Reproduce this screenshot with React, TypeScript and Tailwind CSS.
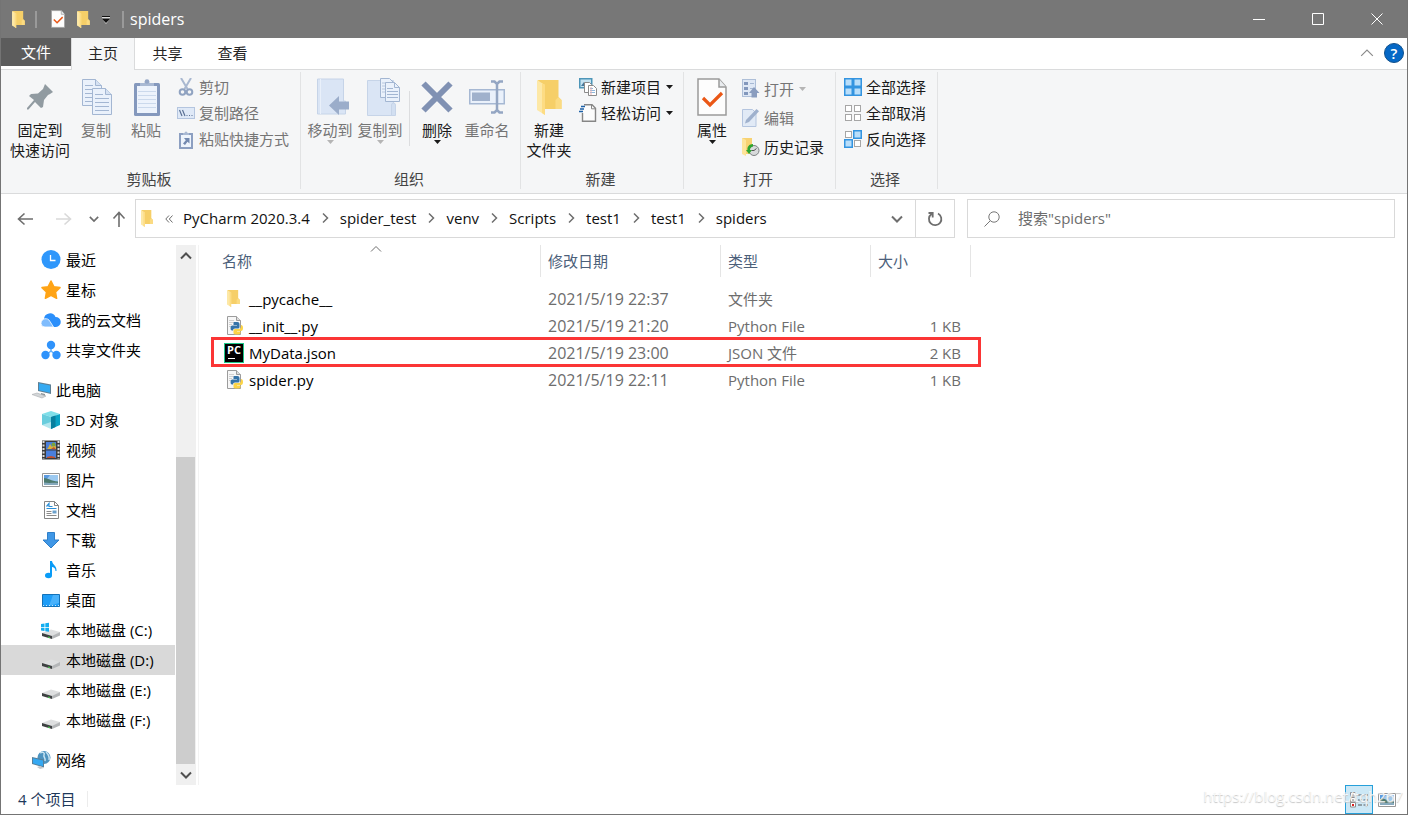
import type { ReactNode } from "react";

type IconProps = { className?: string };

const FolderIcon = ({ className }: IconProps) => (
  <svg viewBox="0 0 25 35" className={className} preserveAspectRatio="none">
    <path d="M1 0h20.5v17l3 3v9H8z" fill="#f6cf68" />
    <path d="M21.5 17l3 3v9h-6V20z" fill="#fbdb82" />
    <path d="M0 0l8 5v30l-8-5z" fill="#fde8a6" />
    <path d="M5 3.200l3 1.800v30l-3-1.900z" fill="#fddc83" />
  </svg>
);

const PropertiesIcon = ({ className }: IconProps) => (
  <svg viewBox="0 0 30 38" className={className}>
    <path d="M1 1h21l7 8v28H1z" fill="#fdfdfd" stroke="#9a9a9a" strokeWidth="1.5" />
    <path d="M22 1v8h7" fill="#e9ecef" stroke="#9a9a9a" strokeWidth="1.5" />
    <path d="M6 20l7 7L25 15" fill="none" stroke="#ea5716" strokeWidth="3.200" />
  </svg>
);

const PinIcon = () => (
  <svg viewBox="0 0 26 26" className="h-[26px] w-[26px]">
    <path
      d="M18 0l8 8-3 2-2 1-4 5-1 7-2 1-6-6L1.500 25.500 0 25.500v-1.500L7 16 2 12l2-2 7-.500L16 5z"
      fill="#919ba1"
    />
  </svg>
);

const Page = ({ x, y }: { x: number; y: number }) => (
  <g transform={`translate(${x} ${y})`}>
    <path d="M.5.5h13l6 6v20H.5z" fill="#eaf1fb" stroke="#a3b6d2" />
    <path d="M13.500.500v6h6" fill="#d5e1f2" stroke="#a3b6d2" />
    <path d="M3 6.500h8M3 10.500h14M3 14.500h14M3 18.500h14M3 22.500h14" stroke="#a3b6d2" />
  </g>
);

const CopyIcon = () => (
  <svg viewBox="-2 0 32 36" className="h-9 w-8">
    <Page x={0} y={0} />
    <Page x={10} y={9} />
  </svg>
);

const PasteIcon = () => (
  <svg viewBox="-1 0 27 37" className="h-[37px] w-[27px]">
    <rect y="4" width="26" height="33" rx="1.500" fill="#8498bd" />
    <rect x="3" y="7" width="20" height="27" fill="#edf3fc" />
    <path d="M4 12.500h18M4 16.500h18M4 20.500h18M4 24.500h18M4 28.500h18" stroke="#cbd9ec" />
    <path d="M6 7V4h4.500a2.500 2.500 0 015 0H20v3z" fill="#a9b9d3" />
    <circle cx="13" cy="2.500" r="2.300" fill="#94a6c6" />
  </svg>
);

const CutIcon = () => (
  <svg viewBox="0 0 18 18" className="h-[18px] w-[18px]" fill="none">
    <path d="M4 0l6.500 11M14 0L7.500 11" stroke="#a9b8d0" strokeWidth="2" />
    <circle cx="5.500" cy="14" r="2.800" stroke="#90a3c1" strokeWidth="2" />
    <circle cx="12.500" cy="14" r="2.800" stroke="#90a3c1" strokeWidth="2" />
  </svg>
);

const CopyPathIcon = () => (
  <svg viewBox="0 0 18 12" className="h-3 w-[18px]">
    <rect x=".5" y=".5" width="17" height="11" fill="#dfe9f7" stroke="#b4c5df" />
    <path d="M2.500 3l2.500 6M5.500 3L8 9" stroke="#5b7195" strokeWidth="1.200" />
    <path d="M9.500 8.500h1M12 8.500h1M14.500 8.500h1" stroke="#5b7195" />
  </svg>
);

const PasteShortcutIcon = () => (
  <svg viewBox="0 0 18 19" className="h-[19px] w-[18px]">
    <rect x="2" y="3" width="14" height="16" fill="#8c9fc1" />
    <rect x="4" y="5" width="10" height="12" fill="#eef4fc" />
    <path d="M6 5V3h1.500a1.500 1.500 0 013 0H12v2z" fill="#a9b9d3" />
    <path d="M7 8h5.500v5.500l-2-1.800L8 15l-2-1.500 2.800-3.300z" fill="#7389b0" />
  </svg>
);

const MoveToIcon = () => (
  <svg viewBox="-6 0 38 38" className="h-[38px] w-[38px]">
    <path d="M.5 1h26v22h2v13H.5z" fill="#dae5f5" stroke="#c6d4e8" />
    <path d="M3.500 1v35" stroke="#e9f0fa" />
    <path d="M12 27.500L22 18v5.500h10v8H22V37z" fill="#9badca" />
  </svg>
);

const CopyToIcon = () => (
  <svg viewBox="-8 0 42 39" className="h-[39px] w-[42px]">
    <path d="M.5 2.500h26v35H.5z" fill="#dae5f5" stroke="#c6d4e8" />
    <path d="M24.500 27a2 2 0 014 0v10.500h-4z" fill="#d2dff1" stroke="#c6d4e8" />
    <path d="M13.500.500h9l4 4v15h-13z" fill="#eaf1fb" stroke="#a3b6d2" />
    <path d="M15 5h7M15 8h9M15 11h9M15 14h9" stroke="#b9c8de" />
    <path d="M18.500 4.500h9l5 5v14h-14z" fill="#eaf1fb" stroke="#a3b6d2" />
    <path d="M27.500 4.500v5h5" fill="none" stroke="#a3b6d2" />
    <path d="M20 10.500h6M20 13.500h11M20 16.500h11M20 19.500h11" stroke="#a3b6d2" />
  </svg>
);

const DeleteIcon = () => (
  <svg viewBox="0 0 32 32" className="h-8 w-8">
    <path d="M2.500 2.500l27 27M29.500 2.500l-27 27" stroke="#8091b3" strokeWidth="6" />
  </svg>
);

const RenameIcon = () => (
  <svg viewBox="0 0 36 34" className="h-[34px] w-9" fill="none">
    <rect x=".75" y="9.750" width="34.500" height="14" fill="#eaf1fb" stroke="#a6b8d3" strokeWidth="1.500" />
    <rect x="3" y="12.500" width="18" height="8.500" fill="#a0b1cc" />
    <path d="M28 3v28M22 1.500h3.500L28 4l2.500-2.500H34M22 32.500h3.500L28 30l2.500 2.500H34" stroke="#94a6c3" strokeWidth="2.500" />
  </svg>
);

const NewItemIcon = () => (
  <svg viewBox="0 0 18 18" className="h-[18px] w-[18px]">
    <rect x=".75" y=".75" width="12" height="9" fill="#c5e3f2" stroke="#4d95b8" strokeWidth="1.500" />
    <path d="M2 8l3-4 3 4z" fill="#47789a" />
    <path d="M5.500 4.500h5l2 2v8h-7z" fill="#fff" stroke="#8b8b8b" />
    <path d="M9.500 7.500h5l3 3v7h-8z" fill="#fff" stroke="#8b8b8b" />
    <path d="M11 10.500h3M11 12.500h5M11 14.500h5" stroke="#8db7dc" />
    <path d="M12 9v8" stroke="#e7b0b0" />
  </svg>
);

const EasyAccessIcon = () => (
  <svg viewBox="0 0 18 18" className="h-[18px] w-[18px]">
    <path d="M5 .75h8l3.500 3.500v13H3.500V9" fill="#fcfcfc" stroke="#868686" strokeWidth="1.400" />
    <path d="M12.500.800v4h4" fill="none" stroke="#868686" />
    <path d="M2 2.500h4M1 5h4M0 7.500h4" stroke="#1e62a8" strokeWidth="1.300" />
  </svg>
);

const OpenIcon = () => (
  <svg viewBox="0 0 18 19" className="h-[19px] w-[18px]">
    <rect x=".5" y=".5" width="13" height="17" fill="#dfe8f5" stroke="#aebfd8" />
    <path d="M2 3h4v3H2zM2 8h4v3H2zM2 13h4v3H2z" fill="#8297bc" />
    <path d="M8 4.500h4M8 9.500h3" stroke="#a6b8d3" />
    <path d="M12 8l5.500 6H15v4.500H9.500V14H7z" fill="#8a9dbf" />
  </svg>
);

const EditIcon = () => (
  <svg viewBox="0 0 18 19" className="h-[19px] w-[18px]">
    <path d="M.5 1.500h10l3.500 3.500v13.500H.5z" fill="#e1eaf6" stroke="#b4c5df" />
    <path d="M4 12L14.500 1l2.500 2.300L7 14l-4 1.500z" fill="#9fb1cd" />
  </svg>
);

const HistoryIcon = () => (
  <svg viewBox="0 0 18 18" className="h-[18px] w-[18px]">
    <path d="M0 0h10v10l1 6H3z" fill="#f7d272" />
    <path d="M0 0l4 2v16l-4-2z" fill="#fde49a" />
    <circle cx="12" cy="12.500" r="5" fill="#d7dadb" stroke="#7c8183" />
    <path d="M12 12.500l2.500-2M12 12.500h-2.500" stroke="#555" />
    <path d="M11 6C7 6 5 9 5.500 12H4l3 4 3-4H8c0-2 1-3 3-3.500z" fill="#2ca42f" />
  </svg>
);

const SelectIcon = ({ on }: { on: boolean[] }) => (
  <svg viewBox="0 0 18 18" className="h-[18px] w-[18px]">
    {on.map((filled, i) => {
      const x = (i % 2) * 9;
      const y = Math.floor(i / 2) * 9;
      return filled ? (
        <rect key={i} x={x + 0.75} y={y + 0.75} width="7.500" height="7.500" fill="#b9defa" stroke="#3394e0" strokeWidth="1.500" />
      ) : (
        <rect key={i} x={x + 1.5} y={y + 1.5} width="6" height="6" fill="#fff" stroke="#a6a6a6" />
      );
    })}
  </svg>
);

const Caret = ({ className }: IconProps) => (
  <svg viewBox="0 0 7 4" className={`h-1 w-[7px] ${className}`}>
    <path d="M0 0h7L3.500 4z" fill="currentColor" />
  </svg>
);

const Chevron = ({ d, className }: { d: string; className?: string }) => (
  <svg viewBox="0 0 12 12" className={className} fill="none" stroke="currentColor">
    <path d={d} />
  </svg>
);
const UP = "M1 8.500l5-5 5 5";
const DOWN = "M1 3.500l5 5 5-5";
const RIGHT = "M4 1.500L8.500 6 4 10.500";

/* navigation pane icons, all on a 20px grid */
const RecentIcon = () => (
  <>
    <circle cx="10" cy="9.500" r="9.500" fill="#2f97fb" />
    <path d="M9.500 5v5.500h5" fill="none" stroke="#fff" strokeWidth="1.300" />
  </>
);
const StarIcon = () => (
  <path
    d="M10 1l2.800 5.700 6.200.9-4.500 4.400 1.100 6.300-5.600-3-5.600 3L5.500 12 1 7.600l6.200-.9z"
    fill="#ffa416"
    stroke="#ffa416"
    strokeWidth="1.500"
    strokeLinejoin="round"
  />
);
const CloudIcon = () => (
  <>
    <path d="M3 9a6 6 0 0111.500-2A5 5 0 0115 17H7z" fill="#2b8ffb" />
    <path d="M0 13.500C0 8 7 7 9 11.500L12.500 17H4a3.800 3.800 0 01-4-3.500z" fill="#7fbcfd" stroke="#fff" strokeWidth=".8" />
  </>
);
const ShareIcon = () => (
  <>
    <path d="M10 6v5l-5 4M10 11l5 4" stroke="#60aefb" strokeWidth="1.500" fill="none" />
    <circle cx="10" cy="5" r="4.200" fill="#2f93fb" />
    <circle cx="4.500" cy="15" r="4.200" fill="#2f93fb" />
    <circle cx="15.500" cy="15" r="4.200" fill="#2f93fb" />
  </>
);
const ComputerIcon = () => (
  <>
    <path d="M7 2l13 2.500v9.500L7 11z" fill="#5e7f94" />
    <path d="M8 3.200l11 2.200v7.300L8 10.200z" fill="#35aaf2" />
    <path d="M10 13l4 1v2h-4z" fill="#8b9499" />
    <path d="M1 14.500l5-1.500 9 3-4 2z" fill="#d3d6d8" stroke="#a9adb0" strokeWidth=".6" />
  </>
);
const CubeIcon = () => (
  <>
    <path d="M1 4l9-3 9 3-9 3z" fill="#7fdfe9" />
    <path d="M1 4l9 3v12l-9-4z" fill="#b2e6ee" />
    <path d="M19 4l-9 3v12l9-4z" fill="#0aa3c4" />
    <path d="M10 7l4.500-1.500V17L10 19z" fill="#087f9e" />
    <path d="M1 4l9 3v5L1 15z" fill="#68cddd" />
  </>
);
const VideoIcon = () => (
  <>
    <path d="M1 .5h18v19H1z" fill="#3c3c3c" />
    <path d="M2.500 1v18M17.500 1v18" stroke="#dcdcdc" strokeWidth="2" strokeDasharray="2 1.500" />
    <path d="M5 2h10v7.500H5zM5 10.500h10V18H5z" fill="#4a7fdd" />
    <path d="M7 8l2-4 2 3 2-4 2 4v2H6z" fill="#d9b13b" />
    <path d="M10 9l3-2 2 2.500zM6 17l4-1 4 1v1H6z" fill="#c4502c" />
    <circle cx="12.500" cy="4.500" r="2" fill="#7ba43b" />
  </>
);
const PictureIcon = () => (
  <>
    <path d="M1.500 3.500h17v13h-17z" fill="#fff" stroke="#979797" />
    <path d="M3 5h14v10H3z" fill="#9cc9f0" />
    <path d="M3 5h6l-3 4H3z" fill="#5b9ae0" />
    <path d="M3 8c4 0 7 3 14 3.500V15H3z" fill="#4d7a6e" />
    <path d="M3 12.500c5 1 10 0 14 .5v2H3z" fill="#86a9bd" />
  </>
);
const DocumentIcon = () => (
  <>
    <path d="M3.500 1.500h10l4 4v13h-14z" fill="#fff" stroke="#858585" />
    <path d="M13.500 1.500v4h4" fill="none" stroke="#858585" />
    <path d="M5.500 6.500L8 3.500v3h3.500M5.500 8.500h10" stroke="#2b8fd8" strokeWidth="1.200" fill="none" />
    <path d="M5.500 11.500h5M5.500 13.500h5M5.500 15.500h10" stroke="#8b8b8b" />
    <path d="M11.500 10.500h4v3h-4z" fill="#6ba1cc" />
  </>
);
const DownloadIcon = () => (
  <path d="M6.500 2.500h7v7.500h4.500L10 18 2 10h4.500z" fill="#3f97e6" stroke="#2f7fc9" />
);
const MusicIcon = () => (
  <>
    <ellipse cx="7.500" cy="15.500" rx="3.500" ry="2.800" fill="#0a9cf7" />
    <path d="M9 1h2c.5 4 5 4.500 4.500 10h-1C14.500 8 12.500 7 11 7v8.500H9z" fill="#0a9cf7" />
  </>
);
const DesktopIcon = () => (
  <>
    <path d="M1.500 4.500h17v12h-17z" fill="#1e9df7" stroke="#1472b8" />
    <path d="M12 5h6v8l-10 3z" fill="#49b2fb" />
    <path d="M2 15.500h16" stroke="#c8e6fb" strokeDasharray="1 2" />
  </>
);
const DiskIcon = () => (
  <>
    <path d="M1 13l9-3.500 9 2.500-7 4.500z" fill="#dedfe0" />
    <path d="M1 13l10 3v3L1 16z" fill="#3e4142" />
    <path d="M11 16l8-4v3.500L11 19z" fill="#b4b6b8" />
    <path d="M7 16.500l2 .5v1l-2-.5z" fill="#46d44b" />
  </>
);
const SystemDiskIcon = () => (
  <>
    <DiskIcon />
    <path d="M0 4l3.500-.5V7H0zM4.300 3.300L8 2.800V7H4.300zM0 7.800h3.500V11L0 10.600zM4.300 7.800H8v4l-3.700-.6z" fill="#13aef0" />
  </>
);
const NetworkIcon = () => (
  <>
    <circle cx="13" cy="7.500" r="6.500" fill="#4d93bf" />
    <path d="M9 3c3-2 5 0 4 2s2 3 1 6M15 2c2 2 4 4 3 8" fill="none" stroke="#c9e4f2" strokeWidth="1.500" />
    <path d="M1 7l12 2.500v8L1 14z" fill="#56809b" />
    <path d="M2 8.200l10 2.200v5.800l-10-3z" fill="#34a8f2" />
    <path d="M6 17l3-1 4 2-4 1z" fill="#c3c7ca" />
  </>
);

const PythonFileIcon = () => (
  <svg viewBox="0 0 20 20" className="h-5 w-5">
    <path d="M3.500.500h9l4 4v14h-13z" fill="#f7f7f7" stroke="#9c9c9c" />
    <path d="M12.500.500v4h4" fill="#ddd" stroke="#9c9c9c" />
    <path d="M5 4.500h5M5 6.500h7M5 8.500h3M5 10.500h2" stroke="#d0d0d0" />
    <path d="M10 6h3.500q2 0 2 2v3q0 1.500-1.500 1.500h-3q-2 0-2 2H8q-1.500 0-1.500-2.500T8 9.500h5V9H9.500V7.500Q9.500 6 10 6z" fill="#3674a8" />
    <path d="M17 9q2 0 2 3t-2 3h-4v.5h3.500V17q0 1.500-3.500 1.500T9.500 17v-2.500q0-1.500 1.500-1.500h3.500Q17 13 17 11z" fill="#fcd447" />
  </svg>
);

const PyCharmIcon = () => (
  <span className="flex h-5 w-5 flex-col border border-[#1fc98a] bg-black pl-0.5">
    <span className="text-[11px] leading-3 font-bold text-white">PC</span>
    <span className="mt-0.5 ml-px h-px w-[7px] bg-white" />
  </span>
);

type BigProps = {
  icon: ReactNode;
  lines: string[];
  width: string;
  disabled?: boolean;
  menu?: boolean;
};

const BigButton = ({ icon, lines, width, disabled, menu }: BigProps) => (
  <button
    type="button"
    disabled={disabled}
    className={`flex shrink-0 flex-col items-center leading-5 whitespace-nowrap ${width} ${disabled ? "text-[#757575]" : "text-[#1a1a1a]"}`}
  >
    <span className="flex h-11 items-center justify-center pb-0.5">{icon}</span>
    {lines.map((line) => (
      <span key={line}>{line}</span>
    ))}
    {menu && <Caret className={disabled ? "text-[#b5b5b5]" : "text-[#1a1a1a]"} />}
  </button>
);

type SmallProps = {
  icon: ReactNode;
  label: string;
  height?: string;
  disabled?: boolean;
  menu?: boolean;
};

const SmallButton = ({ icon, label, height = "h-[26px]", disabled, menu }: SmallProps) => (
  <button
    type="button"
    disabled={disabled}
    className={`flex items-center whitespace-nowrap ${height} ${disabled ? "text-[#757575]" : "text-[#1a1a1a]"}`}
  >
    <span className="flex w-[22px] shrink-0">{icon}</span>
    {label}
    {menu && <Caret className={`ml-[5px] ${disabled ? "text-[#b5b5b5]" : "text-[#1a1a1a]"}`} />}
  </button>
);

const Group = ({ label, width, children }: { label: string; width: string; children: ReactNode }) => (
  <section
    aria-label={label}
    className={`flex shrink-0 flex-col border-r border-[#e2e3e4] ${width}`}
  >
    <div className="flex h-[99px] items-start pt-0.5">{children}</div>
    <div className="pr-[3px] text-center leading-5 text-[#444]">{label}</div>
  </section>
);

const quickLinks = [
  { label: "最近", icon: <RecentIcon /> },
  { label: "星标", icon: <StarIcon /> },
  { label: "我的云文档", icon: <CloudIcon /> },
  { label: "共享文件夹", icon: <ShareIcon /> },
];

const computerLinks = [
  { label: "3D 对象", icon: <CubeIcon /> },
  { label: "视频", icon: <VideoIcon /> },
  { label: "图片", icon: <PictureIcon /> },
  { label: "文档", icon: <DocumentIcon /> },
  { label: "下载", icon: <DownloadIcon /> },
  { label: "音乐", icon: <MusicIcon /> },
  { label: "桌面", icon: <DesktopIcon /> },
  { label: "本地磁盘 (C:)", icon: <SystemDiskIcon /> },
  { label: "本地磁盘 (D:)", icon: <DiskIcon />, selected: true },
  { label: "本地磁盘 (E:)", icon: <DiskIcon /> },
  { label: "本地磁盘 (F:)", icon: <DiskIcon /> },
];

const crumbs = ["PyCharm 2020.3.4", "spider_test", "venv", "Scripts", "test1", "test1", "spiders"];

const files = [
  { name: "__pycache__", date: "2021/5/19 22:37", type: "文件夹", size: "", icon: <FolderIcon className="ml-[3px] h-[17px] w-[13px]" /> },
  { name: "__init__.py", date: "2021/5/19 21:20", type: "Python File", size: "1 KB", icon: <PythonFileIcon /> },
  { name: "MyData.json", date: "2021/5/19 23:00", type: "JSON 文件", size: "2 KB", icon: <PyCharmIcon />, marked: true },
  { name: "spider.py", date: "2021/5/19 22:11", type: "Python File", size: "1 KB", icon: <PythonFileIcon /> },
];

type NavItemProps = { label: string; icon: ReactNode; root?: boolean; selected?: boolean };

const NavItem = ({ label, icon, root, selected }: NavItemProps) => (
  <li>
    <a
      href="#"
      className={`flex h-[30px] items-center gap-[5px] whitespace-nowrap text-black ${root ? "pl-[30px]" : "pl-10"} ${selected ? "bg-[#d9d9d9]" : ""}`}
    >
      <svg viewBox="0 0 20 20" className="h-5 w-5 shrink-0">
        {icon}
      </svg>
      {label}
    </a>
  </li>
);

const TitleBar = () => (
  <header className="flex h-[38px] items-center bg-[#777] pr-px pl-[11px] text-white">
    <FolderIcon className="h-[17px] w-[13px]" />
    <span className="ml-2.5 h-[17px] w-0.5 bg-[#9a9a9a]" />
    <button type="button" aria-label="属性" className="ml-3.5">
      <PropertiesIcon className="h-[18px] w-[14px]" />
    </button>
    <button type="button" aria-label="新建文件夹" className="ml-3">
      <FolderIcon className="h-[17px] w-[13px]" />
    </button>
    <button type="button" aria-label="自定义快速访问工具栏" className="ml-3 pt-0.5 text-black">
      <svg viewBox="0 0 8 8" className="h-2 w-2">
        <path d="M0 .5h8" stroke="#111" />
        <path d="M0 1.500h8" stroke="#ddd" />
        <path d="M0 3h8L4 8z" fill="#ddd" />
        <path d="M0 3h8L4 7z" fill="#111" />
      </svg>
    </button>
    <span className="ml-3 h-[17px] w-0.5 bg-[#9a9a9a]" />
    <h1 className="ml-1.5 flex-1 text-base">spiders</h1>
    {[
      { name: "最小化", d: "M0 6.500h12" },
      { name: "最大化", d: "M.5.5h11v11H.5z" },
      { name: "关闭", d: "M.5.5l11 11M11.500.500l-11 11" },
    ].map((b) => (
      <button key={b.name} type="button" aria-label={b.name} className="flex h-full w-[59px] items-center justify-center">
        <svg viewBox="0 0 12 12" className="h-3 w-3" fill="none" stroke="currentColor">
          <path d={b.d} />
        </svg>
      </button>
    ))}
  </header>
);

const Tabs = () => (
  <div className="flex h-8 border-b border-[#dadbdc] bg-white text-[#262626]">
    <button type="button" className="mb-[3px] w-[70px] bg-[#5c5c5c] text-white">
      文件
    </button>
    <button type="button" className="-mb-px w-16 border-x border-[#dadbdc] bg-[#f5f6f7] pb-0.5">
      主页
    </button>
    <button type="button" className="w-[65px] pb-0.5">共享</button>
    <button type="button" className="w-[65px] pb-0.5">查看</button>
    <div className="ml-auto flex items-center gap-2.5 pr-[3px] pb-0.5">
      <button type="button" aria-label="折叠功能区" className="text-[#8a8a8a]">
        <Chevron d={UP} className="h-3.5 w-3.5" />
      </button>
      <button
        type="button"
        aria-label="帮助"
        className="flex h-5 w-5 items-center justify-center rounded-full border border-[#12518c] bg-[#0568c6] font-semibold text-white"
      >
        ?
      </button>
    </div>
  </div>
);

const Ribbon = () => (
  <div className="flex h-[124px] border-b border-[#dadbdc] bg-[#f5f6f7] pt-0.5 pb-1">
    <Group label="剪贴板" width="w-[300px]">
      <div className="flex pt-0.5 pl-2">
        <BigButton icon={<PinIcon />} lines={["固定到", "快速访问"]} width="w-[62px]" />
        <BigButton icon={<CopyIcon />} lines={["复制"]} width="w-[50px]" disabled />
        <BigButton icon={<PasteIcon />} lines={["粘贴"]} width="w-[50px]" disabled />
      </div>
      <div className="ml-1.5">
        <SmallButton icon={<CutIcon />} label="剪切" disabled />
        <SmallButton icon={<CopyPathIcon />} label="复制路径" disabled />
        <SmallButton icon={<PasteShortcutIcon />} label="粘贴快捷方式" disabled />
      </div>
    </Group>
    <Group label="组织" width="w-[220px]">
      <div className="flex pt-0.5 pl-1">
        <BigButton icon={<MoveToIcon />} lines={["移动到"]} width="w-[50px]" disabled menu />
        <BigButton icon={<CopyToIcon />} lines={["复制到"]} width="w-[50px]" disabled menu />
        <span className="mt-[15px] mr-0.5 ml-1 h-[55px] w-px bg-[#dcdddf]" />
        <BigButton icon={<DeleteIcon />} lines={["删除"]} width="w-[50px]" menu />
        <BigButton icon={<RenameIcon />} lines={["重命名"]} width="w-[50px]" disabled />
      </div>
    </Group>
    <Group label="新建" width="w-[163px]">
      <div className="flex pt-0.5 pl-1">
        <BigButton icon={<FolderIcon className="h-[35px] w-[25px]" />} lines={["新建", "文件夹"]} width="w-12" />
      </div>
      <div className="ml-1.5">
        <SmallButton icon={<NewItemIcon />} label="新建项目" menu />
        <SmallButton icon={<EasyAccessIcon />} label="轻松访问" menu />
      </div>
    </Group>
    <Group label="打开" width="w-[152px]">
      <div className="flex pt-0.5 pl-1">
        <BigButton icon={<PropertiesIcon className="h-[38px] w-[30px]" />} lines={["属性"]} width="w-12" menu />
      </div>
      <div className="ml-1.5">
        <SmallButton icon={<OpenIcon />} label="打开" height="h-[29px]" disabled menu />
        <SmallButton icon={<EditIcon />} label="编辑" height="h-[29px]" disabled />
        <SmallButton icon={<HistoryIcon />} label="历史记录" height="h-[29px]" />
      </div>
    </Group>
    <Group label="选择" width="w-[102px]">
      <div className="ml-2">
        <SmallButton icon={<SelectIcon on={[true, true, true, true]} />} label="全部选择" />
        <SmallButton icon={<SelectIcon on={[false, false, false, false]} />} label="全部取消" />
        <SmallButton icon={<SelectIcon on={[false, true, true, false]} />} label="反向选择" />
      </div>
    </Group>
  </div>
);

const Arrow = ({ d }: { d: string }) => (
  <svg viewBox="0 0 16 16" className="h-4 w-4" fill="none" stroke="currentColor" strokeWidth="1.600">
    <path d={d} />
  </svg>
);

const AddressBar = () => (
  <div className="flex items-start pt-[5px] pr-3 pb-[7px] pl-4">
    <div className="flex h-[39px] w-[118px] shrink-0 items-center text-[#6e6e6e]">
      <button type="button" aria-label="后退">
        <Arrow d="M16 8H1.500M7.500 2.500L1.500 8l6 5.500" />
      </button>
      <button type="button" aria-label="前进" disabled className="ml-[23px] text-[#d9d9d9]">
        <Arrow d="M0 8h14.500M8.500 2.500l6 5.500-6 5.500" />
      </button>
      <button type="button" aria-label="最近浏览的位置" className="ml-[17px]">
        <Chevron d={DOWN} className="h-2.5 w-2.5 stroke-2" />
      </button>
      <button type="button" aria-label="上移" className="ml-3">
        <Arrow d="M8 16V1.500M2.500 7.500l5.500-6 5.500 6" />
      </button>
    </div>
    <div className="flex h-[39px] flex-1 items-center border border-[#d9d9d9]">
      <FolderIcon className="ml-[5px] h-[17px] w-3" />
      <svg viewBox="0 0 8 8" className="ml-3 h-2 w-2" fill="none" stroke="#6e6e6e">
        <path d="M4 .5L.8 4 4 7.500M7.500.500L4.300 4l3.200 3.500" />
      </svg>
      <nav aria-label="地址" className="ml-2.5 flex flex-1 items-center pb-0.5 text-[#111]">
        {crumbs.map((crumb, i) => (
          <div key={i} className="flex items-center">
            {i > 0 && <Chevron d={RIGHT} className="mx-[9px] h-3 w-3 stroke-[1.500] text-[#6e6e6e]" />}
            <button type="button">{crumb}</button>
          </div>
        ))}
      </nav>
      <button type="button" aria-label="以前的位置" className="flex h-full w-[37px] items-center justify-center text-[#6e6e6e]">
        <Chevron d={DOWN} className="h-3 w-3 stroke-2" />
      </button>
      <button
        type="button"
        aria-label="刷新"
        className="flex h-full w-[39px] items-center justify-center border-l border-[#d9d9d9] text-[#6e6e6e]"
      >
        <svg viewBox="0 0 16 16" className="h-4 w-4" fill="none" stroke="currentColor" strokeWidth="1.800">
          <path d="M11 2.500a6.200 6.200 0 11-6.500.500M1.500 2h4.200v4.500" />
        </svg>
      </button>
    </div>
    <label className="ml-3 flex h-[39px] w-[428px] items-center border border-[#d9d9d9] pl-4">
      <svg viewBox="0 0 16 16" className="h-4 w-4" fill="none" stroke="#777">
        <circle cx="10" cy="6" r="5.200" />
        <path d="M6.300 9.700L.5 15.500" />
      </svg>
      <input
        type="search"
        aria-label="搜索"
        placeholder={'搜索"spiders"'}
        className="ml-[18px] min-w-0 flex-1 pb-0.5 outline-none placeholder:text-[#6d6d6d]"
      />
    </label>
  </div>
);

const NavPane = () => (
  <aside className="flex w-[195px] shrink-0">
    <nav aria-label="导航窗格" className="w-[174px]">
      <ul>
        {quickLinks.map((item) => (
          <NavItem key={item.label} {...item} />
        ))}
      </ul>
      <ul className="mt-2.5">
        <NavItem label="此电脑" icon={<ComputerIcon />} root />
        {computerLinks.map((item) => (
          <NavItem key={item.label} {...item} />
        ))}
      </ul>
      <ul className="mt-2.5">
        <NavItem label="网络" icon={<NetworkIcon />} root />
      </ul>
    </nav>
    <div className="ml-px flex w-5 flex-col items-center bg-[#f0f0f0] text-[#505050]">
      <button type="button" aria-label="向上滚动" className="flex h-[21px] items-center pr-px">
        <Chevron d={UP} className="h-3 w-3 stroke-2" />
      </button>
      <div className="flex flex-1 flex-col justify-end self-stretch">
        <div className="mr-px h-[307px] bg-[#cdcdcd]" />
      </div>
      <button type="button" aria-label="向下滚动" className="flex h-[21px] items-center pr-px">
        <Chevron d={DOWN} className="h-3 w-3 stroke-2" />
      </button>
    </div>
  </aside>
);

const FileList = () => (
  <main className="ml-0.5 flex-1 border-l border-[#f3f3f3] pl-3">
    <table className="w-[760px] table-fixed border-collapse">
      <thead className="text-left text-[#4c607a]">
        <tr>
          {[
            { label: "名称", width: "w-[330px]", pad: "pl-[11px]" },
            { label: "修改日期", width: "w-[180px]", pad: "pl-[7px]" },
            { label: "类型", width: "w-[150px]", pad: "pl-[7px]" },
            { label: "大小", width: "w-[100px]", pad: "pl-[7px]" },
          ].map((col, i) => (
            <th key={col.label} scope="col" className={`h-10 p-0 align-top font-normal ${col.width}`}>
              <div className={`relative flex h-8 items-center border-r border-[#e5e5e5] ${col.pad}`}>
                {col.label}
                {i === 0 && (
                  <Chevron d={UP} className="absolute -top-0.5 left-1/2 h-3 w-3 -translate-x-1/2 text-[#6e6e6e]" />
                )}
              </div>
            </th>
          ))}
        </tr>
      </thead>
      <tbody className="text-[#6d6d6d]">
        {files.map((file) => (
          <tr key={file.name} className="relative h-[27px]">
            <td className="p-0 pl-[13px]">
              <div className="flex items-center gap-[5px] text-black">
                <span className="flex w-5">{file.icon}</span>
                {file.name}
              </div>
              {file.marked && (
                <span className="pointer-events-none absolute -top-0.5 -right-[10px] left-0 h-[30px] border-3 border-[#fb3535]" />
              )}
            </td>
            <td className="p-0 pl-[7px] text-base leading-5">{file.date}</td>
            <td className="p-0 pl-[7px]">{file.type}</td>
            <td className="p-0 pr-[10px] text-right">{file.size}</td>
          </tr>
        ))}
      </tbody>
    </table>
  </main>
);

const StatusBar = () => (
  <footer className="relative flex h-[29px] items-center pr-2.5 pl-[17px] text-[#1e395b]">
    <span className="mb-0.5 border-r border-[#ececec] pr-3 leading-4">4 个项目</span>
    <button
      type="button"
      aria-label="详细信息"
      className="ml-auto flex h-[29px] w-7 items-center justify-center border border-[#26a0da] bg-[#cce8f6]"
    >
      <svg viewBox="0 0 18 16" className="h-4 w-[18px]" fill="#fff" stroke="#8c8c8c">
        <path d="M.5.5h5v4.500h-5zM.5 5.500h5V10h-5zM.5 10.500h5V15h-5z" />
        <path d="M8 3h4M13.500 3H18M8 8h4M13.500 8H18M8 13h4M13.500 13H18" stroke="#555" />
        <path d="M2 3h2M2 8h2" stroke="#777" />
        <path d="M2 13h2" stroke="#d22" strokeWidth="2" />
      </svg>
    </button>
    <button type="button" aria-label="大缩略图" className="ml-1">
      <svg viewBox="0 0 20 20" className="h-5 w-5">
        <PictureIcon />
      </svg>
    </button>
    <span className="pointer-events-none absolute right-1 bottom-2 text-white/80 [text-shadow:0_1px_1px_#c4c4c4]">
      https://blog.csdn.net/tqh267
    </span>
  </footer>
);

export default function App() {
  return (
    <div className="flex min-h-screen flex-col border-x border-b border-[#747474] bg-white font-['Open_Sans','Noto_Sans_CJK_SC',sans-serif] text-[15px] leading-5">
      <TitleBar />
      <Tabs />
      <Ribbon />
      <AddressBar />
      <div className="flex flex-1">
        <NavPane />
        <FileList />
      </div>
      <StatusBar />
    </div>
  );
}
